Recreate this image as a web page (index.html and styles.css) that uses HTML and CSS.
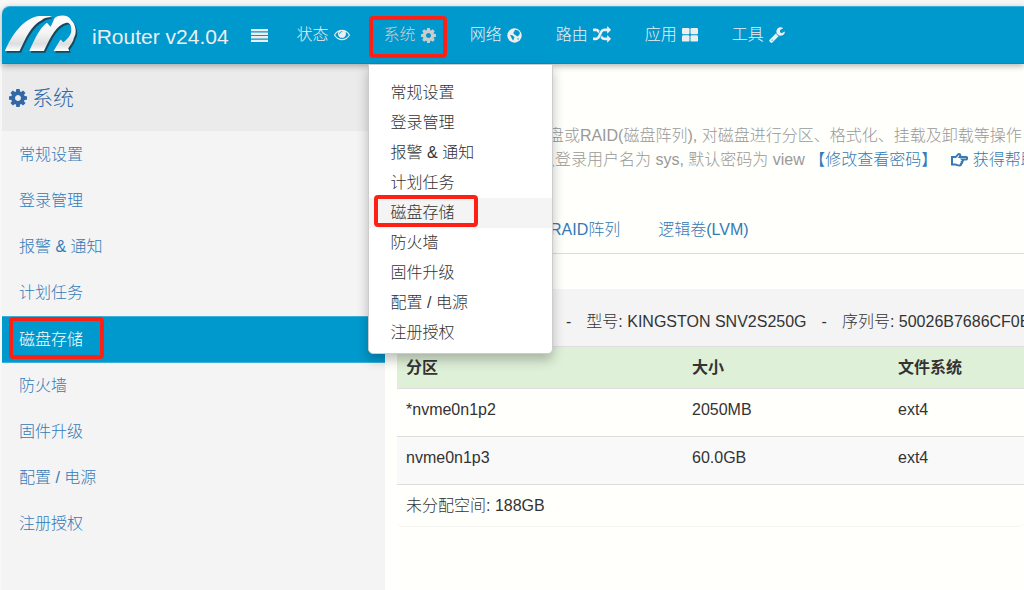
FILE: index.html
```html
<!DOCTYPE html>
<html lang="zh-CN">
<head>
<meta charset="utf-8">
<title>iRouter v24.04</title>
<link rel="stylesheet" href="styles.css">
</head>
<body>
<svg class="defs" aria-hidden="true">
  <symbol id="cog" viewBox="128 128 1536 1536"><path d="M1152 896q0-106-75-181t-181-75-181 75-75 181 75 181 181 75 181-75 75-181zm512-109v222q0 12-8 23t-20 13l-185 28q-19 54-39 91 35 50 107 138 10 12 10 25t-9 23q-27 37-99 108t-94 71q-12 0-26-9l-138-108q-44 23-91 38-16 136-29 186-7 28-36 28h-222q-14 0-24.500-8.500t-11.500-21.500l-28-184q-49-16-90-37l-141 107q-10 9-25 9-14 0-25-11-126-114-165-168-7-10-7-23 0-12 8-23 15-21 51-66.500t54-70.500q-27-50-41-99l-183-27q-13-2-21-12.500t-8-23.500v-222q0-12 8-23t19-13l186-28q14-46 39-92-40-57-107-138-10-12-10-24 0-10 9-23 26-36 98.500-107.500t94.500-71.500q13 0 26 10l138 107q44-23 91-38 16-136 29-186 7-28 36-28h222q14 0 24.500 8.500t11.500 21.500l28 184q49 16 90 37l142-107q9-9 24-9 13 0 25 10 129 119 165 170 7 8 7 22 0 12-8 23-15 21-51 66.500t-54 70.500q26 50 41 98l183 28q13 2 21 12.500t8 23.500z"/></symbol>
  <symbol id="arches" viewBox="0 0 78 46"><path d="M3 39C9 24 22 5 38 3L52 3C49 4 43 5 41 7C30 12 24 26 18 39ZM28 39C33 28 38 16 46 10L50 14L54 5C60 1 68 2 71 7C76 12 77 20 74 25C73 30 70 33 68 36L69 39H53L60 27L63 30C68 26 72 21 71 16C71 12 69 10 66 10C56 12 50 24 43 39Z"/></symbol>
</svg>
<div class="app">
  <header class="topbar">
    <a class="brand" href="#">
      <svg class="logo" viewBox="0 0 78 46" aria-hidden="true">
        <defs><linearGradient id="silver" x1="0" y1="0" x2="0" y2="1"><stop offset="0" stop-color="#fff"/><stop offset=".5" stop-color="#f4f4f4"/><stop offset=".8" stop-color="#dddee0"/><stop offset="1" stop-color="#fff"/></linearGradient></defs>
        <use class="logo-shade" href="#arches" x="1.500" y="1.800"/>
        <use fill="url(#silver)" href="#arches"/>
      </svg>
      <span class="brand-name">iRouter v24.04</span>
    </a>
    <button class="toggle" type="button" aria-label="菜单">
      <svg width="17" height="13" viewBox="0 0 17 13"><path d="M0 0h17v2.300H0zM0 3.600h17v2.300H0zM0 7.100h17v2.300H0zM0 10.700h17V13H0z"/></svg>
    </button>
    <nav class="menu">
      <a href="#">状态<svg width="16" height="16" viewBox="0 64 1792 1792"><path d="M1664 960q-152-236-381-353 61 104 61 225 0 185-131.500 316.500t-316.500 131.500-316.500-131.500-131.500-316.500q0-121 61-225-229 117-381 353 133 205 333.500 326.500t434.500 121.500 434.500-121.500 333.500-326.500zm-720-384q0-20-14-34t-34-14q-125 0-214.500 89.500t-89.500 214.500q0 20 14 34t34 14 34-14 14-34q0-86 61-147t147-61q20 0 34-14t14-34zm848 384q0 34-20 69-140 230-376.500 368.500t-499.500 138.500-499.500-139-376.500-368q-20-35-20-69t20-69q140-229 376.500-368t499.500-139 499.500 139 376.500 368q20 35 20 69z"/></svg></a>
      <div class="dropdown">
        <a class="open" href="#">系统<svg width="15" height="15"><use href="#cog"/></svg></a>
        <span class="mark mark-menu"></span>
        <div class="panel">
          <a href="#">常规设置</a>
          <a href="#">登录管理</a>
          <a href="#">报警 &amp; 通知</a>
          <a href="#">计划任务</a>
          <a class="hover" href="#">磁盘存储<span class="mark mark-entry"></span></a>
          <a href="#">防火墙</a>
          <a href="#">固件升级</a>
          <a href="#">配置 / 电源</a>
          <a href="#">注册授权</a>
        </div>
      </div>
      <a href="#">网络<svg width="15" height="15" viewBox="0 0 15 15"><circle cx="7.500" cy="7.500" r="7.200"/><path class="land" d="M8 1.800L11.300 2.500L13 5L12 7.200L10.300 8.600L9 7.400L7.400 6.500L6.200 5L7.200 3.600ZM3 6.800L5.600 7.600L7.400 9L7 10.600L6.200 12.600L5 11L4.200 9.200ZM10 10.800L11.800 10L11.200 12Z"/></svg></a>
      <a href="#">路由<svg width="18" height="18" viewBox="0 0 1792 1792"><path d="M666 481q-60 92-137 273-22-45-37-72.500t-40.500-63.500-51-56.500-63-35-81.500-14.500h-224q-14 0-23-9t-9-23v-192q0-14 9-23t23-9h224q250 0 410 225zm1126 799q0 14-9 23l-320 320q-9 9-23 9-13 0-22.500-9.500t-9.500-22.500v-192q-32 0-85 .5t-81 1-73-1-71-5-64-10.500-63-18.500-58-28.500-59-40-55-53.500-56-69.500q59-93 136-273 22 45 37 72.500t40.500 63.500 51 56.500 63 35 81.500 14.500h256v-192q0-14 9-23t23-9q12 0 24 10l319 319q9 9 9 23zm0-896q0 14-9 23l-320 320q-9 9-23 9-13 0-22.500-9.500t-9.500-22.500v-192h-256q-48 0-87 15t-69 45-51 61.500-45 77.500q-32 62-78 171-29 66-49.500 111t-54 105-64 100-74 83-90 68.500-106.500 42-128 16.500h-224q-14 0-23-9t-9-23v-192q0-14 9-23t23-9h224q48 0 87-15t69-45 51-61.500 45-77.500q32-62 78-171 29-66 49.500-111t54-105 64-100 74-83 90-68.500 106.500-42 128-16.500h256v-192q0-14 9-23t23-9q12 0 24 10l319 319q9 9 9 23z"/></svg></a>
      <a href="#">应用<svg width="16" height="14" viewBox="0 0 16 14"><rect width="7.500" height="6.300" rx="1.200"/><rect x="8.500" width="7.500" height="6.300" rx="1.200"/><rect y="7.300" width="7.500" height="6.300" rx="1.200"/><rect x="8.500" y="7.300" width="7.500" height="6.300" rx="1.200"/></svg></a>
      <a href="#">工具<svg width="16" height="16" viewBox="60 100 1680 1680"><path d="M448 1472q0-26-19-45t-45-19-45 19-19 45 19 45 45 19 45-19 19-45zm644-420l-682 682q-37 37-90 37-52 0-91-37l-106-108q-38-36-38-90 0-53 38-91l681-681q39 98 114.500 173.500t173.500 114.500zm634-435q0 39-23 106-47 134-164.500 217.500t-258.500 83.500q-185 0-316.500-131.500t-131.500-316.500 131.500-316.500 316.500-131.500q58 0 121.500 16.500t107.500 46.500q16 11 16 28t-16 28l-293 169v224l193 107q5-3 79-48.500t135.500-81 70.500-35.500q15 0 23.500 10t8.500 25z"/></svg></a>
    </nav>
  </header>
  <div class="body">
    <aside class="sidebar">
      <h2 class="side-title"><svg width="18" height="18"><use href="#cog"/></svg>系统</h2>
      <nav class="side-nav">
        <a href="#">常规设置</a>
        <a href="#">登录管理</a>
        <a href="#">报警 &amp; 通知</a>
        <a href="#">计划任务</a>
        <a class="active" href="#">磁盘存储<span class="mark mark-side"></span></a>
        <a href="#">防火墙</a>
        <a href="#">固件升级</a>
        <a href="#">配置 / 电源</a>
        <a href="#">注册授权</a>
      </nav>
    </aside>
    <main class="content">
      <div class="intro">
        <p>您可以, 添加新的磁盘或RAID(磁盘阵列), 对磁盘进行分区、格式化、挂载及卸载等操作</p>
        <p>文件共享服务的默认登录用户名为 sys, 默认密码为 view <a href="#">【修改查看密码】</a><a class="help" href="#"><svg width="17" height="14" viewBox="0 0 17 14"><path d="M1 4h3.500C6.200 3.500 6.300 1 8 1c1.600 0 1.600 1.800.7 3H15c1.500 0 1.500 2.500 0 2.500h-3.600c1 .8.600 2-.4 2.200.6 1-.1 1.900-.9 2 .3 1.300-.5 1.800-1.600 1.800-2.500 0-3-.9-4-.9H1z"/></svg> 获得帮助</a></p>
      </div>
      <nav class="tabs">
        <a href="#">磁盘分区管理</a>
        <a href="#">RAID阵列</a>
        <a href="#">逻辑卷(LVM)</a>
      </nav>
      <section class="disk">
        <div class="disk-head">
          <span class="device">/dev/nvme0n1</span>
          <span>-</span>
          <span>型号: KINGSTON SNV2S250G</span>
          <span>-</span>
          <span>序列号: 50026B7686CF0E</span>
        </div>
        <table class="parts">
          <thead><tr><th class="col-part">分区</th><th class="col-size">大小</th><th>文件系统</th></tr></thead>
          <tbody>
            <tr><td>*nvme0n1p2</td><td>2050MB</td><td>ext4</td></tr>
            <tr><td>nvme0n1p3</td><td>60.0GB</td><td>ext4</td></tr>
          </tbody>
          <tfoot><tr><td colspan="3">未分配空间: 188GB</td></tr></tfoot>
        </table>
      </section>
    </main>
  </div>
</div>
</body>
</html>
```

FILE: styles.css
```css
* { box-sizing: border-box; }
body {
  margin: 0;
  background: #f7f7f7;
  color: #333;
  font: 300 16px/24px "Liberation Sans", "Noto Sans CJK SC", sans-serif;
  overflow: hidden;
}
a { color: #337ab7; text-decoration: none; }
.defs { position: absolute; width: 0; height: 0; }
.app {
  display: flex;
  flex-direction: column;
  min-height: 100vh;
  padding: 6px 0 0 2px;
}
.topbar {
  position: relative;
  z-index: 2;
  display: flex;
  align-items: center;
  height: 58px;
  background: #0099ce;
  border-top: 1px solid #3cb0d8;
  border-bottom: 1px solid #1686ad;
  border-radius: 8px 0 0 0;
  box-shadow: 0 2px 6px rgba(0, 0, 0, .3);
}
.brand { display: flex; align-items: center; gap: 14px; color: #eee; }
.logo { width: 76px; height: 45px; }
.logo-shade { fill: #17495c; }
.brand-name { padding-top: 4px; font-size: 21px; }
.toggle { margin: 0 29px 0 22px; padding: 0; border: 0; background: none; line-height: 0; }
.toggle svg, .menu svg { fill: #eee; }
.menu { display: flex; gap: 34px; align-items: center; white-space: nowrap; }
.menu > a, .open { display: flex; align-items: center; gap: 5px; color: #eee; }
.menu .open { color: #ccc; }
.menu .open svg { fill: #ccc; }
.menu .land { fill: #0099ce; }
.dropdown { position: relative; }
.mark {
  position: absolute;
  border: 4px solid #ff2015;
  border-radius: 4px;
  pointer-events: none;
}
.mark-menu { inset: -7px -11px -11px -15px; }
.mark-entry { left: 5px; top: -3px; width: 104px; height: 32px; }
.mark-side { left: 7px; top: 0; width: 95px; height: 42px; }
.panel {
  position: absolute;
  left: -16px;
  top: 41px;
  width: 185px;
  padding: 13px 0 5px;
  background: #fff;
  border: 1px solid #ccc;
  border-radius: 0 0 5px 5px;
  box-shadow: 0 6px 12px rgba(0, 0, 0, .25);
}
.panel a {
  position: relative;
  display: block;
  padding: 3px 22px;
  color: #333;
}
.panel .hover { background: #f4f4f4; }
.body { flex: 1; display: flex; }
.sidebar { flex: 0 0 383px; background: #f4f4f4; }
.side-title {
  display: flex;
  align-items: center;
  gap: 5px;
  height: 67px;
  margin: 0;
  padding: 0 7px;
  background: #ebebeb;
  color: #3068a8;
  font-size: 21px;
  font-weight: 300;
}
.side-title svg { fill: #3068a8; }
.side-nav { padding-top: 1px; }
.side-nav a { display: block; padding: 11px 17px; }
.side-nav .active {
  position: relative;
  padding: 11px 17px 10px;
  background: #0099ce;
  border-top: 1px solid #3cb0d8;
  border-bottom: 1px solid #3cb0d8;
  color: #fff;
}
.content {
  flex: 1;
  min-width: 0;
  padding: 60px 0 0 12px;
  background: #fffffb;
  overflow: hidden;
  white-space: nowrap;
}
.intro { padding: 0 14px; color: #999; }
.intro p { margin: 0; }
.help { margin-left: 14px; }
.help svg { vertical-align: -2px; fill: none; stroke: #337ab7; stroke-width: 2; }
.tabs { display: flex; margin-top: 37px; border-bottom: 1px solid #ddd; }
.tabs a { padding: 9px 19px 11px; }
.disk { margin-top: 35px; border-bottom: 1px solid #f4f4f0; border-radius: 5px; }
.disk-head {
  display: flex;
  gap: 15px;
  padding: 21px 9px 12px;
  background: #f4f4f4;
}
.disk-head span { flex-shrink: 0; }
.device { width: 145px; }
.parts { width: 100%; border-collapse: collapse; }
.parts th, .parts td { padding: 9px; border-top: 1px solid #ddd; text-align: left; }
.parts td { padding: 9px 9px 14px; }
.parts tfoot td { padding: 9px 9px 8px; }
.parts th { padding: 9px 9px 8px; background: #dff0d8; font-weight: 700; }
.col-part { width: 286px; }
.col-size { width: 206px; }
.parts tbody tr:nth-child(even) { background: #f9f9f9; }
```
